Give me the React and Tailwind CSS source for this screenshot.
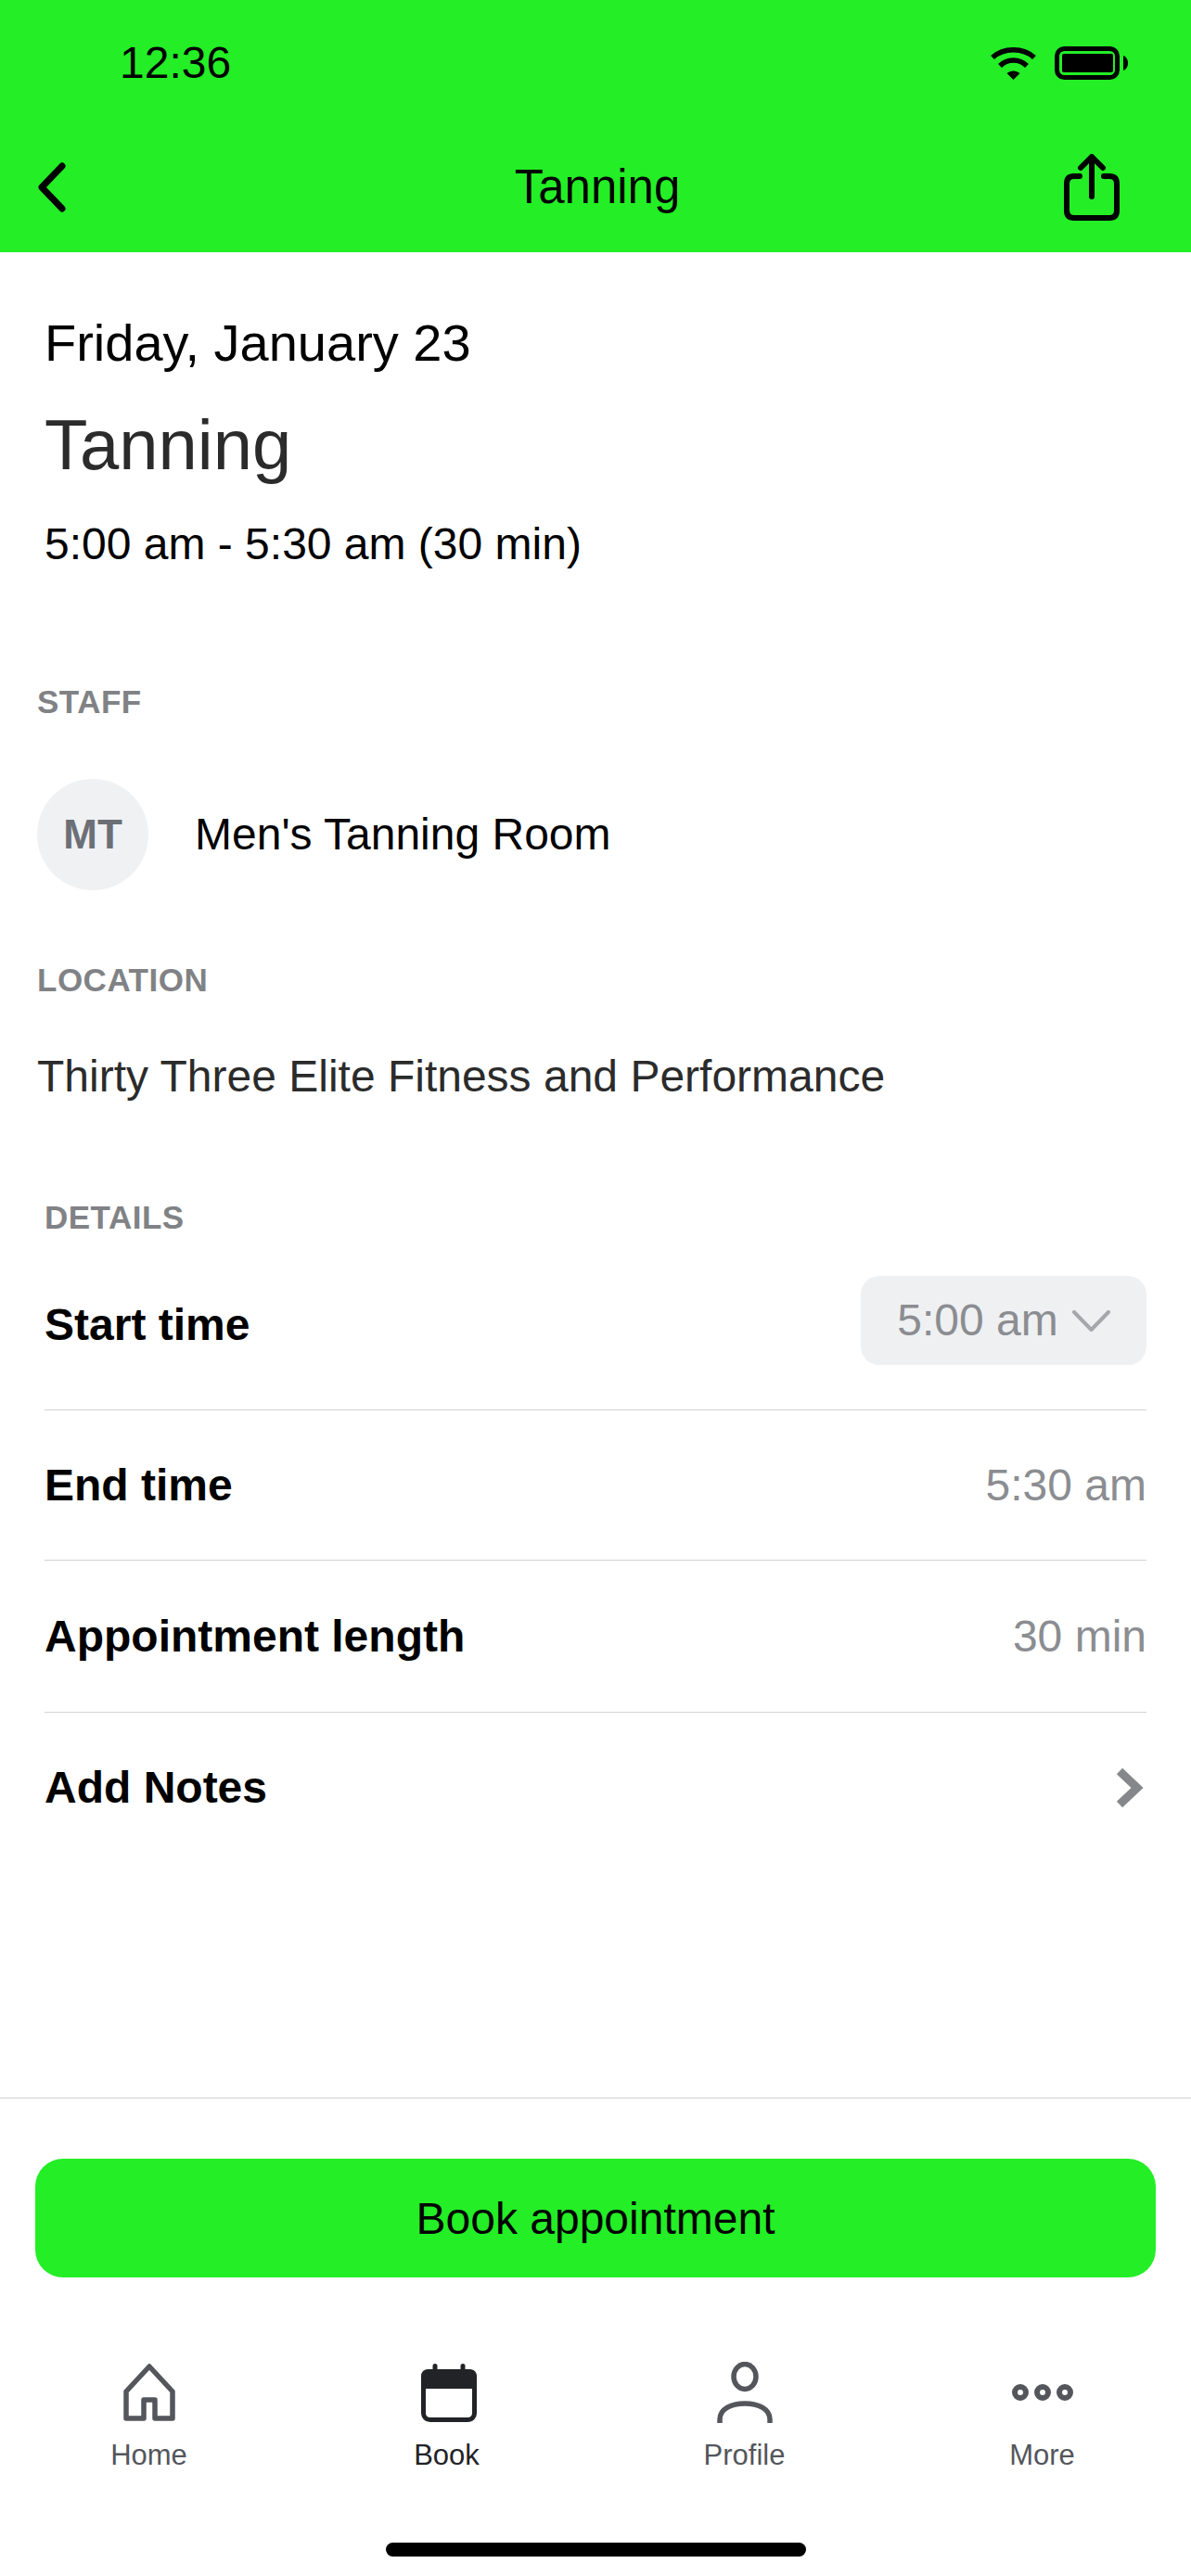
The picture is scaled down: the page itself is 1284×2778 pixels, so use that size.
import React from 'react';

const SectionLabel = ({ children, className = '' }) => (
  <div className={`text-[35px] leading-[40px] font-bold tracking-[0.5px] text-[#808285] ${className}`}>
    {children}
  </div>
);

const DetailRow = ({ label, children, className = '' }) => (
  <div className={`flex items-center justify-between border-[#d2d2d4] ${className}`}>
    <span className="text-[48px] font-bold leading-[56px] text-black">{label}</span>
    {children}
  </div>
);

const WifiIcon = () => (
  <svg width="49" height="36" viewBox="0 0 49 36" fill="none" stroke="#000" strokeWidth="5.5">
    <path d="M2 12 C14 1 35 1 47 12" />
    <path d="M10 21 C18 13 31 13 39 21" />
    <path d="M17.5 29 L24.5 36 L31.5 29 C27 25.5 22 25.5 17.5 29 Z" fill="#000" stroke="none" />
  </svg>
);

const BatteryIcon = () => (
  <svg width="79" height="36" viewBox="0 0 79 36" fill="none">
    <rect x="2.5" y="2.5" width="65" height="31" rx="8" stroke="#000" strokeWidth="5" />
    <rect x="8" y="8" width="55" height="20" rx="2" fill="#000" />
    <path d="M74 10 C77 11 79 14 79 18 C79 22 77 25 74 26 Z" fill="#000" />
  </svg>
);

const BackIcon = () => (
  <svg width="30" height="54" viewBox="0 0 30 54" fill="none" stroke="#000" strokeWidth="7" strokeLinecap="round" strokeLinejoin="round">
    <path d="M26 4 L4 27 L26 50" />
  </svg>
);

const ShareIcon = () => (
  <svg width="60" height="72" viewBox="0 0 60 72" fill="none" stroke="#000" strokeWidth="6" strokeLinecap="round" strokeLinejoin="round">
    <path d="M17 24 H11 Q3 24 3 32 V61 Q3 69 11 69 H49 Q57 69 57 61 V32 Q57 24 49 24 H43" />
    <path d="M30 46 V4" />
    <path d="M18 15 L30 3 L42 15" />
  </svg>
);

// Tab bar icons, drawn inside a shared 68px tall slot
const HomeIcon = () => (
  <svg width="56" height="62" viewBox="0 0 56 62" fill="none" stroke="#54565c" strokeWidth="5.5" strokeLinejoin="round">
    <path d="M28 3 L3 30 V59 H22 V39 H34 V59 H53 V30 Z" />
  </svg>
);

const BookIcon = () => (
  <svg width="60" height="63" viewBox="0 0 60 63" fill="none" className="ml-[5px]">
    <rect x="12.5" y="0" width="5" height="10" rx="2.5" fill="#222326" />
    <rect x="42.5" y="0" width="5" height="10" rx="2.5" fill="#222326" />
    <rect x="2.5" y="8.5" width="55" height="52" rx="7" stroke="#222326" strokeWidth="5" fill="#fff" />
    <path d="M0 14 Q0 6 8 6 H52 Q60 6 60 14 V27 H0 Z" fill="#222326" />
  </svg>
);

const ProfileIcon = () => (
  <svg width="60" height="66" viewBox="0 0 60 66" fill="none" stroke="#54565c" strokeWidth="5.5">
    <ellipse cx="30" cy="16" rx="12" ry="13.5" />
    <path d="M3 66 V62 C3 51 15 45 30 45 C45 45 57 51 57 62 V66" />
  </svg>
);

const MoreIcon = () => (
  <svg width="66" height="18" viewBox="0 0 66 18" fill="none" stroke="#54565c" strokeWidth="6">
    <circle cx="9" cy="9" r="6" />
    <circle cx="33" cy="9" r="6" />
    <circle cx="57" cy="9" r="6" />
  </svg>
);

const TabItem = ({ icon, label, active }) => (
  <div className="flex flex-col items-center">
    <div className="flex h-[68px] items-center justify-center">{icon}</div>
    <span className={`mt-[17px] text-[31px] leading-[34px] ${active ? 'text-[#222326]' : 'text-[#54565c]'}`}>
      {label}
    </span>
  </div>
);

export default function App() {
  return (
    <div className="flex h-[2778px] w-[1284px] flex-col bg-white font-['Liberation_Sans',Arial,sans-serif] text-black">
      {/* Header */}
      <header className="h-[272px] bg-[#23ee26] pt-[40px]">
        <div className="flex h-[56px] items-center justify-between pl-[129px] pr-[68px]">
          <span className="text-[48px] leading-[56px]">12:36</span>
          <div className="flex items-center gap-[20px]">
            <WifiIcon />
            <BatteryIcon />
          </div>
        </div>
        <div className="mt-[61px] flex h-[90px] items-center justify-between pl-[41px] pr-[77px]">
          <div className="w-[100px]">
            <BackIcon />
          </div>
          <span className="text-[51px] leading-[60px]">Tanning</span>
          <ShareIcon />
        </div>
      </header>

      {/* Appointment summary */}
      <section className="px-[48px] pt-[66px]">
        <div className="text-[56px] leading-[64px]">Friday, January 23</div>
        <div className="mt-[36px] text-[76px] leading-[84px] text-[#2b2b2b]">Tanning</div>
        <div className="mt-[36px] text-[48px] leading-[58px]">5:00 am - 5:30 am (30 min)</div>
      </section>

      {/* Staff and location */}
      <section className="mt-[121px] px-[40px]">
        <SectionLabel>STAFF</SectionLabel>
        <div className="mt-[63px] flex items-center gap-[50px]">
          <div className="flex h-[120px] w-[120px] items-center justify-center rounded-full bg-[#eff1f3] text-[44px] font-bold text-[#6c6f76]">
            MT
          </div>
          <span className="text-[48px] leading-[60px]">Men's Tanning Room</span>
        </div>
        <SectionLabel className="mt-[77px]">LOCATION</SectionLabel>
        <div className="mt-[54px] text-[48px] leading-[60px] text-[#2b2b2b]">
          Thirty Three Elite Fitness and Performance
        </div>
      </section>

      {/* Details */}
      <section className="mt-[102px] px-[48px]">
        <SectionLabel>DETAILS</SectionLabel>
        <DetailRow label="Start time" className="h-[188px] border-b pt-[4px]">
          <div className="mb-[9px] flex h-[96px] w-[308px] items-center justify-center gap-[15px] rounded-[20px] bg-[#eff0f2] text-[48px] text-[#8b8d91]">
            5:00 am
            <svg width="41" height="23" viewBox="0 0 41 23" fill="none" stroke="#a5a7aa" strokeWidth="4" strokeLinecap="round" strokeLinejoin="round">
              <path d="M2 2 L20.5 21 L39 2" />
            </svg>
          </div>
        </DetailRow>
        <DetailRow label="End time" className="h-[162px] border-b">
          <span className="text-[48px] text-[#8b8d91]">5:30 am</span>
        </DetailRow>
        <DetailRow label="Appointment length" className="h-[164px] border-b">
          <span className="text-[48px] text-[#8b8d91]">30 min</span>
        </DetailRow>
        <DetailRow label="Add Notes" className="h-[162px]">
          <svg width="30" height="44" viewBox="0 0 30 44" fill="none" stroke="#86878a" strokeWidth="9" className="mr-[3px]">
            <path d="M4 4 L23 22 L4 40" />
          </svg>
        </DetailRow>
      </section>

      {/* Footer action and tab bar */}
      <footer className="mt-auto">
        <div className="border-t border-[#cfcfd1] px-[38px] pt-[65px]">
          <button className="h-[128px] w-full rounded-[30px] bg-[#23ee26] pt-[2px] text-[48px] text-black">
            Book appointment
          </button>
        </div>
        <nav className="mt-[90px] grid grid-cols-4">
          <TabItem icon={<HomeIcon />} label="Home" />
          <TabItem icon={<BookIcon />} label="Book" active />
          <TabItem icon={<ProfileIcon />} label="Profile" />
          <TabItem icon={<MoreIcon />} label="More" />
        </nav>
        <div className="mt-[77px] flex justify-center pb-[21px]">
          <div className="h-[15px] w-[453px] rounded-full bg-black" />
        </div>
      </footer>
    </div>
  );
}
